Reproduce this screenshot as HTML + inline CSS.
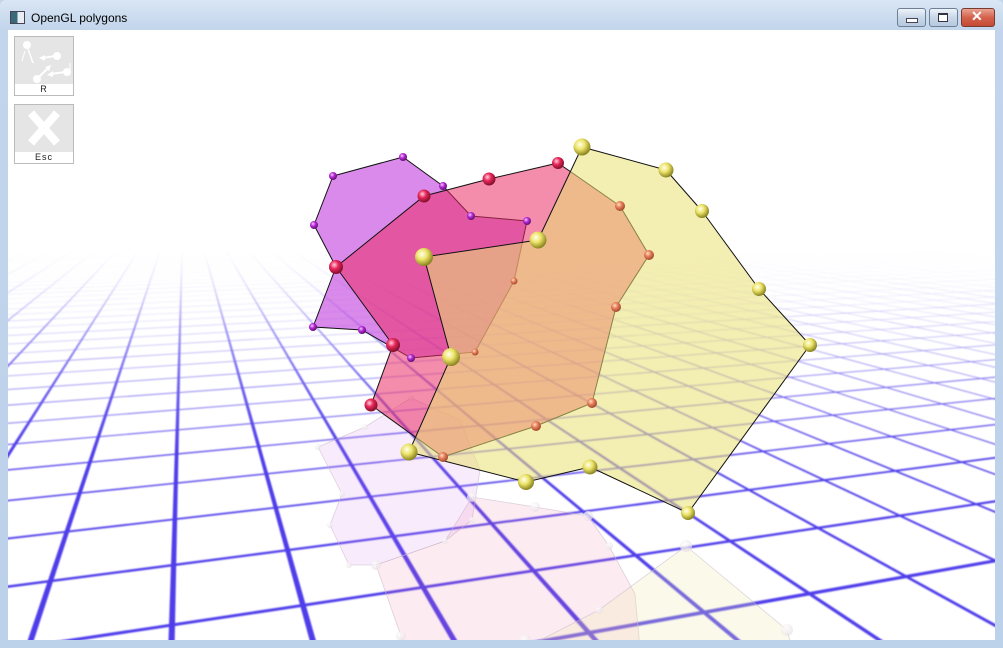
<!DOCTYPE html>
<html><head><meta charset="utf-8"><style>
html,body{margin:0;padding:0;width:1003px;height:648px;overflow:hidden;background:#c3d6ec;font-family:"Liberation Sans",sans-serif}
#frame{position:absolute;left:0;top:0;width:1003px;height:648px;background:linear-gradient(#d9e6f4 0,#c2d5ec 30px,#bcd2ea 100%);border-radius:6px 6px 0 0}
#title{position:absolute;left:31px;top:11px;font-size:12px;color:#000}
#icon{position:absolute;left:10px;top:11px;width:13px;height:11px;border:1px solid #445;background:linear-gradient(90deg,#3a6a7a 50%,#e8eef4 50%)}
.btn{position:absolute;top:8px;height:17px;border:1px solid #6d7f96;border-radius:3px;background:linear-gradient(#eef3f9,#c9d7e8 50%,#b7c9df)}
.btn.close{background:linear-gradient(#e9a493,#d4614c 50%,#c44a34);border-color:#7a3a30}
.box{position:absolute;left:14px;width:58px;height:58px;border:1px solid #bbb;background:#e5e5e5}
.box .lab{position:absolute;left:0;bottom:0;width:58px;height:11px;background:#fff;font-size:9px;line-height:11px;text-align:center;color:#222;letter-spacing:1px}
</style></head><body>
<div id="frame"></div>
<div id="icon"></div>
<div id="title">OpenGL polygons</div>
<div class="btn" style="left:897px;width:27px"><div style="position:absolute;left:8px;top:9px;width:10px;height:3px;background:#fff;border:1px solid #445"></div></div>
<div class="btn" style="left:929px;width:27px"><div style="position:absolute;left:8px;top:4px;width:8px;height:6px;border:1px solid #334;border-top-width:2px;background:#fff"></div></div>
<div class="btn close" style="left:961px;width:32px"><div style="position:absolute;left:9px;top:-1px;color:#fff;font-weight:bold;font-size:14px">✕</div></div>

<svg id="scene" width="1003" height="648" style="position:absolute;left:0;top:0;overflow:hidden">
<defs>
<clipPath id="cl"><rect x="8" y="30" width="987" height="610"/></clipPath>
<filter id="bl" x="-5%" y="-5%" width="110%" height="110%"><feGaussianBlur stdDeviation="0.9"/></filter>
<linearGradient id="fog" gradientUnits="userSpaceOnUse" x1="0" y1="30" x2="0" y2="640">
<stop offset="0" stop-color="#fff" stop-opacity="1"/>
<stop offset="0.36" stop-color="#fff" stop-opacity="1"/>
<stop offset="0.42" stop-color="#fff" stop-opacity="0.8"/>
<stop offset="0.49" stop-color="#fff" stop-opacity="0.45"/>
<stop offset="0.58" stop-color="#fff" stop-opacity="0.18"/>
<stop offset="0.69" stop-color="#fff" stop-opacity="0"/>
</linearGradient>
<radialGradient id="gy" cx="0.38" cy="0.35" r="0.65"><stop offset="0" stop-color="#ffffee"/><stop offset="0.45" stop-color="#ede46a"/><stop offset="1" stop-color="#8a8420"/></radialGradient>
<radialGradient id="gr" cx="0.38" cy="0.35" r="0.65"><stop offset="0" stop-color="#ffd0dc"/><stop offset="0.45" stop-color="#e8265a"/><stop offset="1" stop-color="#80102c"/></radialGradient>
<radialGradient id="gp" cx="0.38" cy="0.35" r="0.65"><stop offset="0" stop-color="#f6d0ff"/><stop offset="0.45" stop-color="#b82ad8"/><stop offset="1" stop-color="#601070"/></radialGradient>
<radialGradient id="go" cx="0.38" cy="0.35" r="0.65"><stop offset="0" stop-color="#ffe0c8"/><stop offset="0.45" stop-color="#e8805a"/><stop offset="1" stop-color="#a04830"/></radialGradient>
<radialGradient id="gw" cx="0.38" cy="0.35" r="0.65"><stop offset="0" stop-color="#fff"/><stop offset="1" stop-color="#e8e0e4"/></radialGradient>
</defs>
<g clip-path="url(#cl)">
<rect x="8" y="30" width="987" height="610" fill="#fff"/>
<g id="grid" fill="#4f3eea" filter="url(#bl)"></g>
<rect x="8" y="30" width="987" height="610" fill="url(#fog)"/>
<g stroke="#c8b8c8" stroke-width="0.8" stroke-opacity="0.6">
<polygon points="411,398 365,427 318,447 342,494 330,525 349,565 376,565 445,541 472,520 480,470 460,420" fill="rgba(200,110,235,0.13)"/>
<polygon points="376,565 401,636 401,648 640,648 635,594 609,546 588,516 535,507 472,497 445,541" fill="rgba(240,110,160,0.14)"/>
<polygon points="686,546 787,630 792,648 525,648 599,610" fill="rgba(240,235,170,0.25)"/>
</g>
<g fill="url(#gw)" opacity="0.7">
<circle cx="411" cy="398" r="3"/><circle cx="365" cy="427" r="3"/><circle cx="318" cy="447" r="3"/><circle cx="342" cy="494" r="3"/><circle cx="330" cy="525" r="3"/><circle cx="349" cy="565" r="3"/><circle cx="376" cy="565" r="5"/><circle cx="401" cy="636" r="5"/><circle cx="445" cy="541" r="3"/><circle cx="472" cy="520" r="3"/><circle cx="472" cy="497" r="5"/><circle cx="535" cy="507" r="5"/><circle cx="588" cy="516" r="5"/><circle cx="609" cy="546" r="4"/><circle cx="686" cy="546" r="6"/><circle cx="787" cy="630" r="6"/><circle cx="525" cy="640" r="6"/><circle cx="599" cy="610" r="4"/>
</g>
<g stroke="#111" stroke-width="1" stroke-linejoin="round">
<polygon points="333,176 403,157 443,186 471,216 527,221 514,281 475,352 411,358 362,330 313,327 336,267 314,225" fill="rgba(192,60,220,0.6)"/>
<polygon points="336,267 424,196 489,179 558,163 620,206 649,255 616,307 592,403 536,426 443,457 371,405 393,345" fill="rgba(235,45,102,0.55)"/>
<polygon points="582,147 666,170 702,211 759,289 810,345 688,513 590,467 526,482 409,452 451,357 424,257 538,240" fill="rgba(233,224,115,0.55)"/>
</g>
<g fill="url(#gp)">
<circle cx="333" cy="176" r="4"/><circle cx="403" cy="157" r="4"/><circle cx="443" cy="186" r="4"/><circle cx="471" cy="216" r="4"/><circle cx="527" cy="221" r="4"/><circle cx="314" cy="225" r="4"/><circle cx="313" cy="327" r="4"/><circle cx="362" cy="330" r="4"/><circle cx="411" cy="358" r="4"/>
</g>
<g fill="url(#go)">
<circle cx="514" cy="281" r="3.5"/><circle cx="475" cy="352" r="3.5"/>
<circle cx="620" cy="206" r="5"/><circle cx="649" cy="255" r="5"/><circle cx="616" cy="307" r="5"/><circle cx="592" cy="403" r="5"/><circle cx="536" cy="426" r="5"/><circle cx="443" cy="457" r="5"/>
</g>
<g fill="url(#gr)">
<circle cx="424" cy="196" r="6.5"/><circle cx="489" cy="179" r="6.5"/><circle cx="558" cy="163" r="6"/><circle cx="336" cy="267" r="7"/><circle cx="393" cy="345" r="7"/><circle cx="371" cy="405" r="6.5"/>
</g>
<g fill="url(#gy)">
<circle cx="582" cy="147" r="8.5"/><circle cx="666" cy="170" r="7.5"/><circle cx="702" cy="211" r="7"/><circle cx="759" cy="289" r="7"/><circle cx="810" cy="345" r="7"/><circle cx="688" cy="513" r="7"/><circle cx="590" cy="467" r="7.5"/><circle cx="526" cy="482" r="8"/><circle cx="409" cy="452" r="8.5"/><circle cx="451" cy="357" r="9"/><circle cx="424" cy="257" r="9"/><circle cx="538" cy="240" r="8.5"/>
</g>
</g>
</svg>

<div class="box" style="top:36px">
<svg width="58" height="46" style="position:absolute;left:0;top:0" stroke="#fff" fill="#fff" stroke-width="2">
<circle cx="12" cy="8" r="3"/><circle cx="42" cy="19" r="3"/><circle cx="52" cy="35" r="3"/><circle cx="22" cy="42" r="3"/>
<line x1="40" y1="19" x2="28" y2="21"/><polygon points="24,21 30,18 30,24" stroke="none"/>
<line x1="50" y1="35" x2="36" y2="37"/><polygon points="32,38 38,34 38,40" stroke="none"/>
<line x1="24" y1="40" x2="33" y2="31"/><polygon points="36,28 30,30 34,34" stroke="none"/>
<line x1="13" y1="12" x2="18" y2="26" stroke-width="1.5"/>
<line x1="10" y1="14" x2="7" y2="24" stroke-width="1"/>
<line x1="55" y1="26" x2="55" y2="33" stroke-width="1"/>
</svg>
<div class="lab">R</div></div>
<div class="box" style="top:104px">
<svg width="58" height="46" style="position:absolute;left:0;top:0"><path d="M16 8 L42 38 M42 8 L16 38" stroke="#fff" stroke-width="8"/></svg>
<div class="lab">Esc</div></div>

<script>
(function(){
var a=0.0452,b=0.1554,O=[172,625],VA=[3200,170],VB=[184,179];
function P(u,v){var w=1+a*u+b*v;return [((O[0]+a*u*VA[0]+b*v*VB[0])/w).toFixed(1),((O[1]+a*u*VA[1]+b*v*VB[1])/w).toFixed(1)];}
var h=0.022,s='',u,v;
function quad(p){return '<polygon points="'+p.map(function(q){return q.join(',');}).join(' ')+'"/>';}
for(u=-40;u<=60;u++){
  var v0=Math.max(-8,(0.06-1-a*(u-h))/b), v1=90;
  if(v0>=v1)continue;
  s+=quad([P(u-h,v0),P(u+h,v0),P(u+h,v1),P(u-h,v1)]);
}
for(v=-8;v<=90;v++){
  var u0=Math.max(-60,(0.06-1-b*(v-h))/a), u1=250;
  if(u0>=u1)continue;
  s+=quad([P(u0,v-h),P(u1,v-h),P(u1,v+h),P(u0,v+h)]);
}
document.getElementById('grid').innerHTML=s;
})();
</script>
</body></html>
